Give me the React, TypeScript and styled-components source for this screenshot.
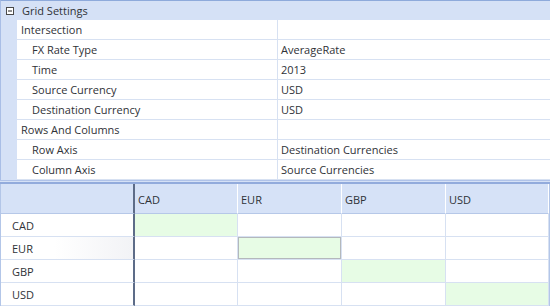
import { Fragment } from "react";
import styled, { createGlobalStyle } from "styled-components";

const GlobalStyle = createGlobalStyle`
    html, body {
        margin: 0;
        padding: 0;
        background: #ffffff;
    }
`

const Root = styled.div`
    width: 550px;
    height: 307px;
    overflow: hidden;
    display: flex;
    flex-direction: column;
    background: #ffffff;
    font-family: "Open Sans", "Noto Sans", sans-serif;
    font-size: 11px;
    color: #2f3237;
    box-sizing: border-box;
`

const PropertyGrid = styled.div`
    border-top: 1px solid #8eaadb;
    border-left: 1px solid #a9bee6;
`

const CategoryBar = styled.div`
    height: 19px;
    background: #d5e1f6;
    display: flex;
    align-items: center;
    padding-left: 5px;
    gap: 8px;
`

const PropRow = styled.div`
    display: grid;
    grid-template-columns: 16px 261px 1fr;
    height: 20px;
`

const Gutter = styled.div`
    background: #d5e1f6;
`

const LabelCell = styled.div<{ $indent?: boolean }>`
    box-sizing: border-box;
    display: flex;
    align-items: center;
    padding-left: ${p => p.$indent ? 15 : 4}px;
    border-bottom: 1px solid #d7e1f2;
    border-right: 1px solid #d7e1f2;
    white-space: nowrap;
`

const ValueCell = styled.div`
    box-sizing: border-box;
    display: flex;
    align-items: center;
    padding-left: 3px;
    border-bottom: 1px solid #d7e1f2;
    white-space: nowrap;
`

const Splitter = styled.div`
    box-sizing: border-box;
    height: 4px;
    background: #d5e1f6;
    border-top: 1px solid #b0c3e9;
    border-bottom: 2px solid #92abdc;
`

const DataGrid = styled.div`
    display: grid;
    grid-template-columns: 134px 103px 104px 104px 103px;
    grid-auto-rows: 23px;
    grid-template-rows: 30px;
    border-left: 1px solid #b3c6e8;
    border-right: 1px solid #b3c6e8;
`

const Corner = styled.div`
    box-sizing: border-box;
    background: #d6e2f7;
    border-right: 2px solid #5d6c88;
    border-bottom: 1px solid #b6c8e8;
`

const ColHeader = styled.div`
    box-sizing: border-box;
    background: #d6e2f7;
    border-right: 1px solid #ffffff;
    border-bottom: 1px solid #b6c8e8;
    display: flex;
    align-items: center;
    padding: 2px 0 0 3px;
`

const RowHeader = styled.div<{ $current?: boolean }>`
    box-sizing: border-box;
    background: ${p => p.$current ? "linear-gradient(to right, #ffffff 40%, #f2f3f6)" : "#ffffff"};
    border-right: 2px solid #5d6c88;
    border-bottom: 1px solid #d7e1f2;
    display: flex;
    align-items: center;
    padding-left: 11px;
`

const DataCell = styled.div<{ $match?: boolean; $focused?: boolean }>`
    box-sizing: border-box;
    background: ${p => p.$match ? "#e7fce5" : "#ffffff"};
    border-right: 1px solid #d7e1f2;
    border-bottom: 1px solid #d7e1f2;
    box-shadow: ${p => p.$focused ? "inset 0 0 0 1px #b4b8bc" : "none"};
`

const ToggleIcon = () => (
    <svg width="8" height="8" viewBox="0 0 8 8">
        <rect x="0.5" y="0.5" width="7" height="7" fill="#ffffff" stroke="#4a4a4a" />
        <line x1="2" y1="4" x2="6" y2="4" stroke="#222" />
    </svg>
)

const properties = [
    { label: "Intersection", value: "", indent: false },
    { label: "FX Rate Type", value: "AverageRate", indent: true },
    { label: "Time", value: "2013", indent: true },
    { label: "Source Currency", value: "USD", indent: true },
    { label: "Destination Currency", value: "USD", indent: true },
    { label: "Rows And Columns", value: "", indent: false },
    { label: "Row Axis", value: "Destination Currencies", indent: true },
    { label: "Column Axis", value: "Source Currencies", indent: true },
]

const currencies = ["CAD", "EUR", "GBP", "USD"]

export default function App() {
    return (
        <Root>
            <GlobalStyle />
            <PropertyGrid>
                <CategoryBar>
                    <ToggleIcon />
                    <span>Grid Settings</span>
                </CategoryBar>
                {properties.map(p => (
                    <PropRow key={p.label}>
                        <Gutter />
                        <LabelCell $indent={p.indent}>{p.label}</LabelCell>
                        <ValueCell>{p.value}</ValueCell>
                    </PropRow>
                ))}
            </PropertyGrid>
            <Splitter />
            <DataGrid>
                <Corner />
                {currencies.map(c => <ColHeader key={c}>{c}</ColHeader>)}
                {currencies.map((row, r) => (
                    <Fragment key={row}>
                        <RowHeader $current={row === "EUR"}>{row}</RowHeader>
                        {currencies.map((col, i) => (
                            <DataCell
                                key={col}
                                $match={r === i}
                                $focused={row === "EUR" && col === "EUR"}
                            />
                        ))}
                    </Fragment>
                ))}
            </DataGrid>
        </Root>
    )
}
